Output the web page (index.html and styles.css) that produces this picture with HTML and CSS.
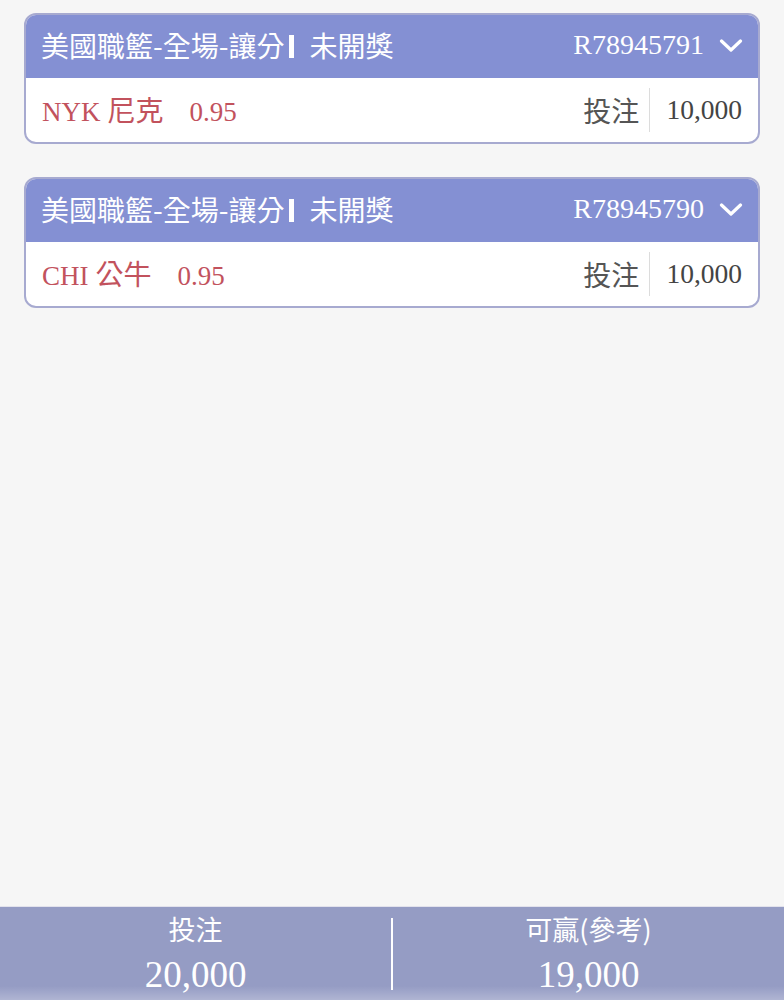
FILE: index.html
```html
<!DOCTYPE html>
<html lang="zh-Hant">
<head>
  <meta charset="UTF-8">
  <meta name="viewport" content="width=device-width, initial-scale=1.0">
  <title>投注紀錄</title>
  <link rel="stylesheet" href="styles.css">
</head>
<body>
  <main class="list">
    <div class="ticket">
      <div class="ticket-head">
        <span class="game">美國職籃-全場-讓分<span class="bar"></span>未開獎</span>
        <span class="order">R78945791
          <svg class="chevron" width="24" height="14" viewBox="0 0 24 14"><polyline points="2.5,2 12,11 21.5,2" fill="none" stroke="#fff" stroke-width="3.2" stroke-linecap="round" stroke-linejoin="round"/></svg>
        </span>
      </div>
      <div class="ticket-body">
        <span class="pick"><span class="team">NYK</span><span class="cjk">尼克</span><span class="odds">0.95</span></span>
        <span class="stake"><span class="stake-label">投注</span><span class="stake-amount">10,000</span></span>
      </div>
    </div>

    <div class="ticket">
      <div class="ticket-head">
        <span class="game">美國職籃-全場-讓分<span class="bar"></span>未開獎</span>
        <span class="order">R78945790
          <svg class="chevron" width="24" height="14" viewBox="0 0 24 14"><polyline points="2.5,2 12,11 21.5,2" fill="none" stroke="#fff" stroke-width="3.2" stroke-linecap="round" stroke-linejoin="round"/></svg>
        </span>
      </div>
      <div class="ticket-body">
        <span class="pick"><span class="team">CHI</span><span class="cjk">公牛</span><span class="odds">0.95</span></span>
        <span class="stake"><span class="stake-label">投注</span><span class="stake-amount">10,000</span></span>
      </div>
    </div>
  </main>

  <footer class="summary">
    <div class="summary-col">
      <span class="summary-label">投注</span>
      <span class="summary-value">20,000</span>
    </div>
    <div class="summary-divider"></div>
    <div class="summary-col">
      <span class="summary-label">可贏(參考)</span>
      <span class="summary-value">19,000</span>
    </div>
  </footer>
</body>
</html>
```

FILE: styles.css
```css
html, body {
  height: 100%;
}
body {
  margin: 0;
  padding: 0;
  background-color: #f6f6f6;
  font-family: "Noto Sans CJK TC", "Noto Sans", sans-serif;
  display: flex;
  flex-direction: column;
  overflow: hidden;
}
.list {
  flex: 1;
  padding: 13px 24px 0;
  display: flex;
  flex-direction: column;
  gap: 33px;
}
.ticket {
  border: 2px solid #a7aad0;
  border-radius: 12px;
  overflow: hidden;
  background-color: #fff;
}
.ticket-head {
  height: 64px;
  background-color: #8490d3;
  color: #fff;
  display: flex;
  align-items: center;
  justify-content: space-between;
  padding: 0 16px;
  margin: -1px -1px 0;
}
.game {
  font-size: 28px;
  display: flex;
  align-items: center;
  margin-top: -3px;
}
.bar {
  display: inline-block;
  width: 5px;
  height: 23px;
  background-color: #fff;
  margin: 4px 15px 0 5px;
}
.order {
  font-family: "Liberation Serif", serif;
  font-size: 28px;
  display: flex;
  align-items: center;
  gap: 15px;
  margin-top: -2px;
}
.chevron {
  display: block;
  margin-top: 2px;
}
.ticket-body {
  height: 64px;
  display: flex;
  align-items: center;
  justify-content: space-between;
  padding: 0 16px;
}
.pick {
  color: #c2525d;
  font-size: 28px;
  display: flex;
  align-items: baseline;
  margin-top: -3px;
}
.team, .odds {
  font-family: "Liberation Serif", serif;
  font-size: 27px;
}
.team {
  margin-right: 7px;
}
.odds {
  margin-left: 26px;
}
.stake {
  display: flex;
  align-items: center;
}
.stake-label {
  font-size: 28px;
  color: #555;
  padding-right: 10px;
}
.stake-amount {
  font-family: "Liberation Serif", serif;
  font-size: 27.5px;
  color: #444;
  border-left: 1px solid #dcdcdc;
  padding-left: 16px;
  line-height: 44px;
}
.summary {
  height: 93px;
  background-color: #959cc4;
  border-top: 1px solid #e2e2ec;
  display: flex;
  align-items: center;
  color: #fff;
  background-image: linear-gradient(to bottom, rgba(255,255,255,0) 85%, rgba(255,255,255,0.25) 100%);
}
.summary-col {
  flex: 1;
  display: flex;
  flex-direction: column;
  align-items: center;
}
.summary-label {
  font-size: 27px;
  line-height: 36px;
  margin-top: 2px;
}
.summary-value {
  font-family: "Liberation Serif", serif;
  font-size: 37px;
  line-height: 48px;
  margin-top: 4px;
}
.summary-divider {
  width: 2px;
  height: 72px;
  background-color: #fff;
}
```
